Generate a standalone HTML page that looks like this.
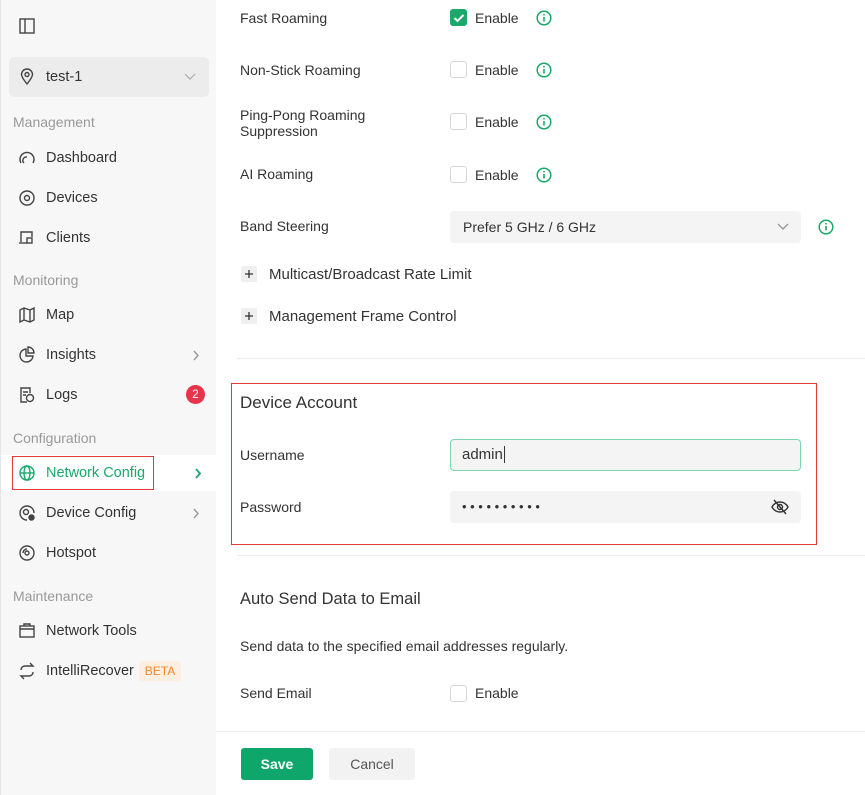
<!DOCTYPE html>
<html><head><meta charset="utf-8"><style>
*{box-sizing:border-box;margin:0;padding:0}
body{width:865px;height:795px;overflow:hidden;background:#fff;font-family:"Liberation Sans",sans-serif;font-size:14px;color:#333;position:relative}
.a{position:absolute;white-space:nowrap}
#sb{position:absolute;left:0;top:0;width:216px;height:795px;background:#f7f7f7;border-left:1px solid #e6e6e6}
.sec{color:#999;font-size:14px}
.it{font-size:14.5px;color:#333;margin-top:1px}
svg{position:absolute;fill:none;stroke:#444;stroke-width:1.4}
.cb{position:absolute;width:17px;height:17px;border:1px solid #d6d6d6;border-radius:3px;background:#fff}
.inp{position:absolute;background:#f4f4f4;border-radius:4px}
.pl{position:absolute;width:16px;height:16px;background:#efefef;border-radius:2px}
</style></head><body>
<svg width="0" height="0" style="position:absolute"><defs><g id="inf"><circle cx="8" cy="8" r="6.8" stroke="#1aa86b" stroke-width="1.5"/><path d="M8 7v4.5" stroke="#1aa86b" stroke-width="1.6"/><circle cx="8" cy="4.8" r="0.9" fill="#1aa86b" stroke="none"/></g></defs></svg>
<div id="sb">
<svg style="left:18px;top:18px" width="16" height="16"><rect x="1" y="1" width="14" height="14"/><line x1="6" y1="1" x2="6" y2="15"/></svg>
<div class="a" style="left:8px;top:57px;width:200px;height:40px;background:#ececec;border-radius:5px"></div>
<svg style="left:18px;top:68px" width="16" height="18"><path d="M8 16C4 11 2.5 8.5 2.5 6.5a5.5 5.5 0 0111 0C13.5 8.5 12 11 8 16z"/><circle cx="8" cy="6.5" r="2"/></svg>
<div class="a it" style="left:45px;top:68px">test-1</div>
<svg style="left:183px;top:73px;stroke:#aaa;stroke-width:1.2" width="12" height="8"><path d="M1 1l5 5 5-5"/></svg>
<div class="a sec" style="left:12px;top:114px">Management</div>
<svg style="left:17px;top:149px" width="18" height="18"><path d="M3 14A7 7 0 1115 14"/><path d="M6 14a3.5 3.5 0 013-6"/></svg>
<div class="a it" style="left:45px;top:149px">Dashboard</div>
<svg style="left:17px;top:189px" width="18" height="18"><circle cx="9" cy="9" r="7"/><circle cx="9" cy="9" r="2.5"/></svg>
<div class="a it" style="left:45px;top:189px">Devices</div>
<svg style="left:17px;top:229px" width="18" height="18"><path d="M3 13V3h11v5"/><path d="M1 14h8"/><rect x="9" y="9" width="5" height="5"/></svg>
<div class="a it" style="left:45px;top:229px">Clients</div>
<div class="a sec" style="left:12px;top:272px">Monitoring</div>
<svg style="left:17px;top:306px" width="18" height="18"><path d="M2 4l4-2 6 2 4-2v12l-4 2-6-2-4 2z M6 2v12 M12 4v12"/></svg>
<div class="a it" style="left:45px;top:306px">Map</div>
<svg style="left:17px;top:346px" width="18" height="18"><path d="M8 3a6.5 6.5 0 107 7H8z"/><path d="M10 1a6 6 0 016 6h-6z"/></svg>
<div class="a it" style="left:45px;top:346px">Insights</div>
<svg style="left:191px;top:350px;stroke:#999" width="8" height="11"><path d="M2 1l4 4.5-4 4.5"/></svg>
<svg style="left:17px;top:386px" width="18" height="18"><path d="M9 16H3V2h9v5"/><path d="M5 6h5M5 9h3"/><circle cx="12" cy="12" r="3.5"/></svg>
<div class="a it" style="left:45px;top:386px">Logs</div>
<div class="a" style="left:185px;top:385px;width:19px;height:19px;border-radius:50%;background:#e8334a;color:#fff;font-size:12px;text-align:center;line-height:19px">2</div>
<div class="a sec" style="left:12px;top:430px">Configuration</div>
<div class="a" style="left:0;top:455px;width:215px;height:36px;background:#fff"></div>
<div class="a" style="left:11px;top:456px;width:142px;height:34px;border:1.5px solid #e53a3a"></div>
<svg style="left:17px;top:464px;stroke:#1aa86b" width="18" height="18"><circle cx="9" cy="9" r="7"/><ellipse cx="9" cy="9" rx="3" ry="7"/><path d="M2 9h14"/></svg>
<div class="a it" style="left:45px;top:464px;color:#1aa86b">Network Config</div>
<svg style="left:193px;top:468px;stroke:#1aa86b;stroke-width:1.8" width="8" height="11"><path d="M2 1l4 4.5-4 4.5"/></svg>
<svg style="left:17px;top:504px" width="18" height="18"><path d="M9 16a7 7 0 117-7"/><circle cx="8" cy="8" r="2.5"/><circle cx="13.5" cy="13.5" r="2.5" fill="#444"/></svg>
<div class="a it" style="left:45px;top:504px">Device Config</div>
<svg style="left:191px;top:508px;stroke:#999" width="8" height="11"><path d="M2 1l4 4.5-4 4.5"/></svg>
<svg style="left:17px;top:544px" width="18" height="18"><circle cx="9" cy="9" r="7"/><circle cx="9" cy="9" r="2"/><path d="M5 9a4 4 0 014-4"/></svg>
<div class="a it" style="left:45px;top:544px">Hotspot</div>
<div class="a sec" style="left:12px;top:588px">Maintenance</div>
<svg style="left:17px;top:622px" width="18" height="18"><rect x="2" y="4" width="14" height="11"/><path d="M2 7h14M6 4V2h6v2"/></svg>
<div class="a it" style="left:45px;top:622px">Network Tools</div>
<svg style="left:17px;top:662px" width="18" height="18"><path d="M3 8a4 4 0 014-4h8l-3-3M15 10a4 4 0 01-4 4H3l3 3"/></svg>
<div class="a it" style="left:45px;top:662px">IntelliRecover</div>
<div class="a" style="left:138px;top:661px;width:42px;height:20px;background:#fdeee2;color:#f0892b;border-radius:3px;font-size:12px;text-align:center;line-height:20px">BETA</div>
</div>

<div class="a" style="left:240px;top:10px">Fast Roaming</div>
<div class="cb" style="left:450px;top:9px;background:#1aa86b;border-color:#1aa86b"></div>
<svg style="left:453px;top:13px;stroke:#fff;stroke-width:2" width="12" height="10"><path d="M1.5 5l3 3 6-6"/></svg>
<div class="a" style="left:475px;top:10px">Enable</div>
<svg style="left:536px;top:10px" width="16" height="16"><use href="#inf"/></svg>

<div class="a" style="left:240px;top:62px">Non-Stick Roaming</div>
<div class="cb" style="left:450px;top:61px"></div>
<div class="a" style="left:475px;top:62px">Enable</div>
<svg style="left:536px;top:62px" width="16" height="16"><use href="#inf"/></svg>

<div class="a" style="left:240px;top:107px;line-height:16px">Ping-Pong Roaming<br>Suppression</div>
<div class="cb" style="left:450px;top:113px"></div>
<div class="a" style="left:475px;top:114px">Enable</div>
<svg style="left:536px;top:114px" width="16" height="16"><use href="#inf"/></svg>

<div class="a" style="left:240px;top:166px">AI Roaming</div>
<div class="cb" style="left:450px;top:166px"></div>
<div class="a" style="left:475px;top:167px">Enable</div>
<svg style="left:536px;top:167px" width="16" height="16"><use href="#inf"/></svg>

<div class="a" style="left:240px;top:218px">Band Steering</div>
<div class="inp" style="left:450px;top:211px;width:351px;height:32px"></div>
<div class="a" style="left:463px;top:219px">Prefer 5 GHz / 6 GHz</div>
<svg style="left:777px;top:223px;stroke:#999" width="12" height="8"><path d="M1 1l5 5 5-5"/></svg>
<svg style="left:818px;top:219px" width="16" height="16"><use href="#inf"/></svg>

<div class="pl" style="left:241px;top:266px"></div>
<svg style="left:241px;top:266px;stroke:#333;stroke-width:1.3" width="16" height="16"><path d="M4 8h8M8 4v8"/></svg>
<div class="a" style="left:269px;top:266px;font-size:15px">Multicast/Broadcast Rate Limit</div>
<div class="pl" style="left:241px;top:308px"></div>
<svg style="left:241px;top:308px;stroke:#333;stroke-width:1.3" width="16" height="16"><path d="M4 8h8M8 4v8"/></svg>
<div class="a" style="left:269px;top:308px;font-size:15px">Management Frame Control</div>

<div class="a" style="left:237px;top:358px;width:628px;height:1px;background:#eee"></div>
<div class="a" style="left:231px;top:383px;width:586px;height:162px;border:1.5px solid #e53a3a"></div>
<div class="a" style="left:240px;top:393px;font-size:17px">Device Account</div>
<div class="a" style="left:240px;top:447px">Username</div>
<div class="inp" style="left:450px;top:439px;width:351px;height:32px;border:1px solid #7dd6b0"></div>
<div class="a" style="left:462px;top:446px;font-size:15px">admin<span style="border-left:1px solid #333;margin-left:1px"></span></div>
<div class="a" style="left:462px;top:499px;letter-spacing:3.6px;font-size:13px">••••••••••</div>
<div class="a" style="left:240px;top:499px">Password</div>
<div class="inp" style="left:450px;top:491px;width:351px;height:32px;z-index:-1"></div>
<svg style="left:771px;top:499px;stroke:#333" width="18" height="16"><path d="M1 8c2-3.5 5-5 8-5s6 1.5 8 5c-2 3.5-5 5-8 5s-6-1.5-8-5z"/><circle cx="9" cy="8" r="2.5"/><path d="M3 1l12 14"/></svg>
<div class="a" style="left:237px;top:555px;width:628px;height:1px;background:#eee"></div>

<div class="a" style="left:240px;top:590px;font-size:16.5px">Auto Send Data to Email</div>
<div class="a" style="left:240px;top:638px">Send data to the specified email addresses regularly.</div>
<div class="a" style="left:240px;top:685px">Send Email</div>
<div class="cb" style="left:450px;top:685px"></div>
<div class="a" style="left:475px;top:685px">Enable</div>
<div class="a" style="left:216px;top:731px;width:649px;height:1px;background:#eee"></div>
<div class="a" style="left:241px;top:748px;width:72px;height:32px;background:#0ea66b;border-radius:3px;color:#fff;font-weight:bold;text-align:center;line-height:32px">Save</div>
<div class="a" style="left:329px;top:748px;width:86px;height:32px;background:#f2f2f2;border-radius:3px;color:#555;text-align:center;line-height:32px">Cancel</div>
</body></html>
